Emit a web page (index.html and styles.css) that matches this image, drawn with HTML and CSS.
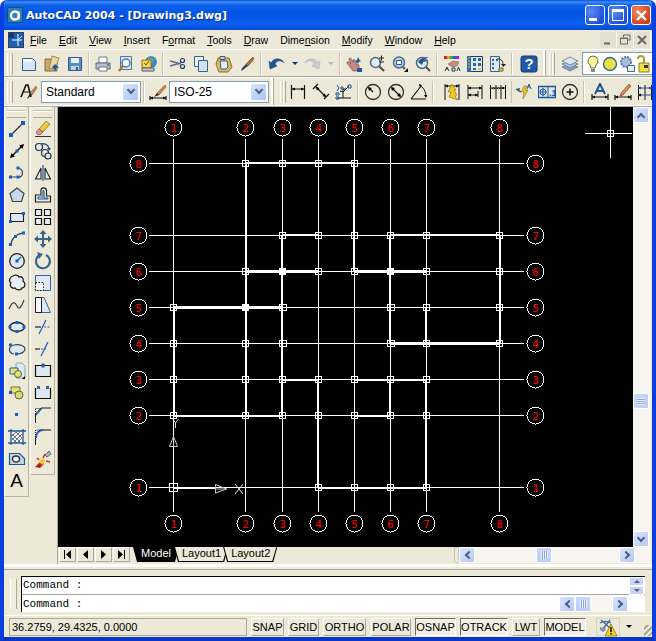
FILE: index.html
```html
<!DOCTYPE html>
<html lang="en">
  <head>
    <meta charset="UTF-8" />
    <title>AutoCAD 2004 - [Drawing3.dwg]</title>
    <link rel="stylesheet" href="styles.css">
  </head>
  <body>
    <div class="window">
      <div class="titlebar">
        <svg class="app-icon" width="16" height="16" viewBox="0 0 16 16"><rect width="16" height="16" fill="#0d4f86"/><rect x="1" y="1" width="14" height="14" fill="#2f7fb0"/><circle cx="8" cy="8.5" r="4" fill="none" stroke="#fff" stroke-width="2.4"/><path d="M11.5 4.5v8" stroke="#fff" stroke-width="2"/></svg>
        <span class="title">AutoCAD 2004 - [Drawing3.dwg]</span>
        <div class="caption-btns">
          <div class="cap-btn"><span class="cap-min"></span></div>
          <div class="cap-btn"><span class="cap-max"></span></div>
          <div class="cap-btn cap-close"><svg width="13" height="13" viewBox="0 0 13 13"><path d="M2 2l9 9M11 2l-9 9" stroke="#fff" stroke-width="2.4"/></svg></div>
        </div>
      </div>

      <div class="menubar">
        <svg class="doc-icon" width="16" height="16" viewBox="0 0 16 16"><rect x=".5" y=".5" width="15" height="15" fill="#1c5fb4" stroke="#33415c"/><path d="M1 1h5v5H1z" fill="#0e3a7a"/><path d="M10 2v12M4 8h10" stroke="#fff"/><path d="M10 8l4-4" stroke="#bfe0ff"/></svg>
        <span class="menu-item"><u>F</u>ile</span>
        <span class="menu-item"><u>E</u>dit</span>
        <span class="menu-item"><u>V</u>iew</span>
        <span class="menu-item"><u>I</u>nsert</span>
        <span class="menu-item">F<u>o</u>rmat</span>
        <span class="menu-item"><u>T</u>ools</span>
        <span class="menu-item"><u>D</u>raw</span>
        <span class="menu-item">Dime<u>n</u>sion</span>
        <span class="menu-item"><u>M</u>odify</span>
        <span class="menu-item"><u>W</u>indow</span>
        <span class="menu-item"><u>H</u>elp</span>
        <div class="mdi-btns">
          <div class="mdi-btn"><svg width="10" height="10" viewBox="0 0 10 10"><path d="M1 8.5h6" stroke="#666" stroke-width="2"/></svg></div>
          <div class="mdi-btn"><svg width="11" height="11" viewBox="0 0 11 11"><path d="M3.500 3V1h6.500v5H8M.5 4h7v6h-7z" fill="none" stroke="#666"/><path d="M1 4.500h6" stroke="#666"/></svg></div>
          <div class="mdi-btn"><svg width="10" height="10" viewBox="0 0 10 10"><path d="M1 1l8 8M9 1l-8 8" stroke="#666" stroke-width="2"/></svg></div>
        </div>
      </div>

      <div class="toolrow toolrow-top">
        <div class="grip"></div>
        <div class="tool"><svg width="18" height="18" viewBox="0 0 18 18"><path d="M2.500 3.500h10l3 3v9h-13z" fill="#d8e6f4" stroke="#35648f"/><path d="M3 4h9v3H3z" fill="#f4f8fc"/></svg></div>
        <div class="tool"><svg width="18" height="18" viewBox="0 0 18 18"><path d="M2 4h5l1 1h6v11H2z" fill="#c9a968" stroke="#7c6a40"/><path d="M9 1l7 2-3 9-7 2z" fill="#e9d9a0" stroke="#9c8a50"/><path d="M12 9l-3 3 4 4v-3h3z" fill="#1f5aa6"/></svg></div>
        <div class="tool"><svg width="18" height="18" viewBox="0 0 18 18"><path d="M2.500 2.500h13v13h-13z" fill="#5a8cc0" stroke="#2f5f92"/><path d="M5 3h8v5H5z" fill="#e8f0f8"/><path d="M5 11h8v4H5z" fill="#c4d2de"/><path d="M10 12h2v3h-2z" fill="#2f5f92"/></svg></div>
        <div class="sep"></div>
        <div class="tool"><svg width="18" height="18" viewBox="0 0 18 18"><path d="M5 2h8v6H5z" fill="#fff" stroke="#6b7b90"/><path d="M2 8h14v6H2z" fill="#b8c0cc" stroke="#5a6878"/><path d="M5 12h8v4H5z" fill="#fff" stroke="#6b7b90"/><path d="M13 10h2" stroke="#334"/></svg></div>
        <div class="tool"><svg width="18" height="18" viewBox="0 0 18 18"><path d="M3.500 1.500h11v13h-11z" fill="#dce8f4" stroke="#4a78a8"/><circle cx="9" cy="8" r="4" fill="#f4f8fc" stroke="#4a78a8" stroke-width="1.500"/><path d="M6 11l-4 5" stroke="#a8762c" stroke-width="2.400"/></svg></div>
        <div class="tool"><svg width="18" height="18" viewBox="0 0 18 18"><circle cx="11" cy="7" r="6" fill="#3f8ac4"/><path d="M8 3l5 1-1 4-4-1z" fill="#6bbf60"/><path d="M2 5h9v8H2z" fill="#f8d84a" stroke="#8c7420"/><path d="M4 8l2 2 3-4" fill="none" stroke="#7a5010"/><path d="M2 13h12v3H2z" fill="#c8ccd4" stroke="#555"/></svg></div>
        <div class="sep sep-6"></div>
        <div class="tool"><svg width="18" height="18" viewBox="0 0 18 18"><path d="M1 6l11 3M1 11l11-3" stroke="#5b6c86" stroke-width="1.300"/><circle cx="13.500" cy="5.500" r="2" fill="none" stroke="#1c3d6a" stroke-width="1.200"/><circle cx="13.500" cy="11.500" r="2" fill="none" stroke="#1c3d6a" stroke-width="1.200"/></svg></div>
        <div class="tool"><svg width="18" height="18" viewBox="0 0 18 18"><path d="M2.500 1.500h9v10h-9z" fill="#e8f0f8" stroke="#35648f"/><path d="M6.500 5.500h9v11h-9z" fill="#d4e2f0" stroke="#35648f"/></svg></div>
        <div class="tool"><svg width="18" height="18" viewBox="0 0 18 18"><path d="M3 3h11l3 9-4 5H4L1 9z" fill="#d8b860" stroke="#8c7430"/><path d="M5 1.500h5v3H5z" fill="#ccd" stroke="#556"/><path d="M5 6h7l1 6-2 2H6z" fill="#e8eef6" stroke="#35648f"/></svg></div>
        <div class="tool"><svg width="18" height="18" viewBox="0 0 18 18"><path d="M15 2L8 9l2 2 6-7z" fill="#b06c30" stroke="#6a3c14" stroke-width=".6"/><path d="M8 9l2 2-5 4-2 1 1-3z" fill="#3a4450"/></svg></div>
        <div class="sep"></div>
        <div class="tool tool-wide"><svg width="19" height="18" viewBox="0 0 19 18"><path d="M4 8c3-6 11-5 13 0-3-3-7-3-9 1l2 2-7 3-1-8z" fill="#1f5596" stroke="#143a6c" stroke-width=".5"/></svg></div>
        <div class="drop"><span class="drop-arrow"></span></div>
        <div class="tool"><svg width="19" height="18" viewBox="0 0 19 18"><path d="M15 8C12 2 4 3 2 8c3-3 7-3 9 1l-2 2 7 3 1-8z" fill="#c8ccd0" stroke="#a8acb0" stroke-width=".5"/></svg></div>
        <div class="drop"><span class="drop-arrow drop-off"></span></div>
        <div class="sep"></div>
        <div class="tool"><svg width="18" height="18" viewBox="0 0 18 18"><path d="M4 4c1-2 2-1 3 1l1 2 1-3 1 3 2-1-1 3 3 1v3l-3 3H8L2 8c0-1 1-2 2-1l2 2z" fill="#c88a80" stroke="#70504c" stroke-width=".7"/><path d="M13 2l1 2h1l-1 1 2 1-2 1-1 2-1-2-2-1 2-1z" fill="#1f5596"/><path d="M12 13h5v4h-5z" fill="#1f5596"/></svg></div>
        <div class="tool"><svg width="18" height="18" viewBox="0 0 18 18"><circle cx="7.500" cy="7.500" r="5" fill="#dcecf8" stroke="#566a80" stroke-width="1.500"/><path d="M11 11l5 5" stroke="#555" stroke-width="2.200"/><path d="M11 3h5M13.500 .5v5M11 7h5" stroke="#222"/></svg></div>
        <div class="tool"><svg width="18" height="18" viewBox="0 0 18 18"><circle cx="8" cy="7.500" r="5.500" fill="#bcd4ea" stroke="#566a80" stroke-width="1.500"/><path d="M5.500 5.500h5v4h-5z" fill="#fff" stroke="#1f5596"/><path d="M12 12l2 2" stroke="#555" stroke-width="2"/><path d="M13 17l4-4v4z" fill="#111"/></svg></div>
        <div class="tool"><svg width="18" height="18" viewBox="0 0 18 18"><circle cx="8" cy="8" r="5.500" fill="#dcecf8" stroke="#566a80" stroke-width="1.500"/><path d="M12 12l4 4" stroke="#555" stroke-width="2.200"/><path d="M4 7c2-4 7-5 11-5l-5 2 3 2-4 1-1 3z" fill="#1f5596"/></svg></div>
        <div class="sep sep-6"></div>
        <div class="tool"><svg width="18" height="18" viewBox="0 0 18 18"><path d="M1 1h3v3H1z" fill="#e02020"/><path d="M4 1h3v3H4z" fill="#e0a020"/><path d="M7 1h3v3H7z" fill="#30b030"/><path d="M10 1h3v3h-3z" fill="#2060e0"/><path d="M13 1h3v3h-3z" fill="#a020c0"/><path d="M5 9l5-3 6 1-2 4-5 1z" fill="#c88a80" stroke="#70504c" stroke-width=".5"/><path d="M2 16l2-4 2 4M5 14h-2M9 13h3v3h-3zM14 16l1.500-4 1.500 4" fill="none" stroke="#2a3a50"/></svg></div>
        <div class="tool"><svg width="18" height="18" viewBox="0 0 18 18"><path d="M1.500 1.500h15v15h-15z" fill="#dce8f4" stroke="#17406e"/><path d="M1 1h4v16H1z" fill="#2f6aa8"/><path d="M2 3h2M2 6h2M2 9h2M2 12h2" stroke="#f0d040"/><path d="M7 3h3v3H7zM12 3h3v3h-3zM7 8h3v3H7zM12 8h3v3h-3zM7 13h3v2H7z" fill="#35648f"/><path d="M12 13h3v2h-3z" fill="#f0c020"/></svg></div>
        <div class="tool"><svg width="18" height="18" viewBox="0 0 18 18"><path d="M1.500 1.500h9v15h-9z" fill="#dce8f4" stroke="#35648f"/><path d="M3 4h2v2H3zM7 4h2v2H7zM3 8h2v2H3zM3 12h2v2H3z" fill="#35648f"/><path d="M8 4c4-1 6 2 6 6" fill="none" stroke="#222"/><path d="M12 9h5l-2.500 3z" fill="#222"/><path d="M10 13h4v3h-4z" fill="#f0c020" stroke="#665"/></svg></div>
        <div class="sep sep-8"></div>
        <div class="tool"><svg width="18" height="18" viewBox="0 0 18 18"><rect x="1" y="1" width="16" height="16" rx="2" fill="#1e5aa8" stroke="#143a6c"/><text x="9" y="14" class="help-glyph">?</text></svg></div>
        <div class="toolbar-end"></div>
        <div class="grip grip-layer"></div>
        <div class="tool"><svg width="18" height="18" viewBox="0 0 18 18"><path d="M9 9l8 3-8 4-8-4z" fill="#8da4c0" stroke="#4d6a8c" stroke-width=".7"/><path d="M9 6l8 3-8 4-8-4z" fill="#b4c6dc" stroke="#4d6a8c" stroke-width=".7"/><path d="M9 2l8 4-8 4-8-4z" fill="#dce6f0" stroke="#4d6a8c" stroke-width=".7"/></svg></div>
        <div class="layer-combo">
          <svg width="16" height="18" viewBox="0 0 16 18"><path d="M8 1a5 5 0 0 1 3 9l-1 3H6l-1-3a5 5 0 0 1 3-9z" fill="#fff7a0" stroke="#6a6a40"/><path d="M6 14h4v3H6z" fill="#889"/></svg>
          <svg width="16" height="18" viewBox="0 0 16 18"><circle cx="8" cy="9" r="6.500" fill="#f0e040" stroke="#2f6aa8" stroke-width="1.400"/></svg>
          <svg width="16" height="18" viewBox="0 0 16 18"><circle cx="7" cy="7" r="5" fill="#a8bcdc" stroke="#5a78a8" stroke-width="2" stroke-dasharray="2 1"/><path d="M8.500 10.500h7v6h-7z" fill="#e8eef6" stroke="#4a6a90"/></svg>
          <svg width="16" height="18" viewBox="0 0 16 18"><path d="M2 4a3 3 0 0 1 6 0v4" fill="none" stroke="#b0a020" stroke-width="2"/><path d="M3 8h10v9H3z" fill="#f0e040" stroke="#8a8020"/><path d="M8 10h4v3H8z" fill="#333"/></svg>
        </div>
      </div>

      <div class="toolrow toolrow-bottom">
        <div class="grip"></div>
        <div class="tool"><svg width="18" height="18" viewBox="0 0 18 18"><path d="M1 14L6 2h2l3 12" fill="none" stroke="#111" stroke-width="1.600"/><path d="M3.500 9h6" stroke="#111"/><path d="M16 3l-6 7 2 2 5-7z" fill="#c8884c" stroke="#6a4a24" stroke-width=".5"/><path d="M10 10l2 2-5 4z" fill="#222"/></svg></div>
        <div class="combo combo-first"><span class="combo-text">Standard</span><span class="combo-btn"><span class="chevron"></span></span></div>
        <div class="sep"></div>
        <div class="tool"><svg width="18" height="18" viewBox="0 0 18 18"><path d="M1 13v4M17 13v4M1 15h16" stroke="#111" stroke-width="1.200"/><path d="M1 15l3-1.500v3zM17 15l-3-1.500v3z"/><path d="M16 2L8 10l2 2 7-8z" fill="#c8884c" stroke="#6a4a24" stroke-width=".5"/><path d="M8 10l2 2-5 2z" fill="#222"/></svg></div>
        <div class="combo"><span class="combo-text">ISO-25</span><span class="combo-btn"><span class="chevron"></span></span></div>
        <div class="toolbar-end toolbar-end-short"></div>
        <div class="grip grip-dim"></div>
        <div class="tool"><svg width="18" height="18" viewBox="0 0 18 18"><path d="M2.500 2v14M15.500 2v14M3 6h12" stroke="#111" stroke-width="1.200"/><path d="M3 6l3-1.500v3zM15 6l-3-1.500v3z"/></svg></div>
        <div class="tool"><svg width="18" height="18" viewBox="0 0 18 18"><path d="M1 6l5-5M12 16l5-5M4 4l10 10" stroke="#111" stroke-width="1.200"/><path d="M4 4l3.500 1-2.500 2.500zM14 14l-3.500-1 2.500-2.500z"/></svg></div>
        <div class="tool"><svg width="18" height="18" viewBox="0 0 18 18"><path d="M8 15V6h3M14 3l-6 6-3-1M2 15h14" fill="none" stroke="#111"/><path d="M2 2l2 3-2 3M1 10h3v2H1zM1 14h3v2H1z" fill="none" stroke="#1f5596"/><path d="M13 2h3v3h-3zM6 4h2v2H6z" fill="none" stroke="#1f5596"/></svg></div>
        <div class="sep sep-6"></div>
        <div class="tool"><svg width="18" height="18" viewBox="0 0 18 18"><circle cx="9" cy="9" r="7.500" fill="none" stroke="#333" stroke-width="1.300"/><path d="M9 9L5 5" stroke="#111" stroke-width="1.300"/><path d="M4 4l4 1-3 3z"/></svg></div>
        <div class="tool"><svg width="18" height="18" viewBox="0 0 18 18"><circle cx="9" cy="9" r="7.500" fill="none" stroke="#333" stroke-width="1.300"/><path d="M5 5l8 8" stroke="#111" stroke-width="1.300"/><path d="M4 4l4 1-3 3zM14 14l-4-1 3-3z"/></svg></div>
        <div class="tool"><svg width="18" height="18" viewBox="0 0 18 18"><path d="M1 16h15M1 16L11 3" stroke="#111" stroke-width="1.200" fill="none"/><path d="M9 2c4 2 7 6 7 12" fill="none" stroke="#111"/><path d="M16 15l-2-3h3z"/><path d="M9 1l3 1-2 2z"/></svg></div>
        <div class="sep sep-10"></div>
        <div class="tool"><svg width="18" height="18" viewBox="0 0 18 18"><path d="M2 1v16M16 1v16M2 3h14" stroke="#111"/><path d="M2 3l3-1.500v3zM16 3l-3-1.500v3z"/><path d="M9 1L5 9h3l-2 5 9 3-3-4 2-1-3-5h2z" fill="#f0c820" stroke="#6a5a10" stroke-width=".5"/></svg></div>
        <div class="tool"><svg width="18" height="18" viewBox="0 0 18 18"><path d="M2 2v14M16 2v14M2 5h14M2 12h10" stroke="#111" fill="none"/><path d="M2 5l3-1.500v3zM16 5l-3-1.500v3zM2 12l3-1.500v3zM12 12l-3-1.500v3z"/><path d="M12 8v6" stroke="#111"/></svg></div>
        <div class="tool"><svg width="18" height="18" viewBox="0 0 18 18"><path d="M1.500 2v14M7 2v14M12 2v14M16.500 2v14M1.500 5h15" stroke="#111" fill="none"/><path d="M2 5l3-1.200v2.400zM7 5l-3-1.200v2.400zM7 5l3-1.200v2.400zM12 5l-3-1.200v2.400zM12 5l3-1.200v2.400z"/></svg></div>
        <div class="sep sep-3"></div>
        <div class="tool"><svg width="18" height="18" viewBox="0 0 18 18"><path d="M1 6l5 3" stroke="#111"/><path d="M1 6l4-1-1 4z" fill="#1f5596"/><path d="M9 3L6 9h3l-1 7 5-9h-3l2-4z" fill="#f0c820" stroke="#6a5a10" stroke-width=".5"/><path d="M12 6l2-5 2 5M13 4h2" fill="none" stroke="#1f5596"/></svg></div>
        <div class="tool"><svg width="18" height="18" viewBox="0 0 18 18"><path d="M.5 3.500h17v11H.5z" fill="#dce8f4" stroke="#1f5596" stroke-width="1.300"/><circle cx="5" cy="9" r="3" fill="none" stroke="#1f5596"/><path d="M5 5v8M1.500 9h7M10 3v12" stroke="#1f5596"/><text x="11" y="13" class="tol-glyph">.1</text></svg></div>
        <div class="tool"><svg width="18" height="18" viewBox="0 0 18 18"><circle cx="9" cy="9" r="7.500" fill="none" stroke="#333" stroke-width="1.300"/><path d="M5.500 9h7M9 5.500v7" stroke="#111" stroke-width="1.500"/></svg></div>
        <div class="sep sep-7"></div>
        <div class="tool"><svg width="18" height="18" viewBox="0 0 18 18"><path d="M1 11v6M17 11v6M1 14h16" stroke="#111" stroke-width="1.200"/><path d="M1 14l3-1.500v3zM17 14l-3-1.500v3z"/><path d="M4 11l5-10 5 10M6 8h6" fill="none" stroke="#1f5596" stroke-width="2"/></svg></div>
        <div class="tool"><svg width="18" height="18" viewBox="0 0 18 18"><path d="M1 12v5M17 12v5M1 14h16" stroke="#111" stroke-width="1.200"/><path d="M1 14l3-1.500v3zM17 14l-3-1.500v3z"/><path d="M15 1l2 2-8 9-3 1 1-3z" fill="#d88a50" stroke="#7a3a20" stroke-width=".6"/></svg></div>
        <div class="tool"><svg width="18" height="18" viewBox="0 0 18 18"><path d="M1.500 2v15M14.500 2v15M8 2v15" stroke="#111"/><path d="M1 5h17M1 12h17" stroke="#1f5596"/><path d="M1 5l3-1.500v3zM15 5l-3-1.500v3z" fill="#1f5596"/><path d="M1 12l3-1.500v3z"/></svg></div>
      </div>

      <div class="workspace">
        <div class="dock">
          <div class="side-bar side-bar-draw">
            <div class="side-grip"></div>
            <div class="side-tool"><svg width="18" height="18" viewBox="0 0 18 18"><path d="M3 15L15 3" stroke="#222" stroke-width="1.100"/><path d="M1 13h4v4H1zM13 1h4v4h-4z" fill="#0f62c6"/></svg></div>
            <div class="side-tool"><svg width="18" height="18" viewBox="0 0 18 18"><path d="M4 14L14 4" stroke="#111" stroke-width="1.500"/><path d="M2 16l1.500-5 3.500 3.500zM16 2l-1.500 5L11 3.500z"/><path d="M7.500 7.500h3v3h-3z" fill="#0f62c6"/></svg></div>
            <div class="side-tool"><svg width="18" height="18" viewBox="0 0 18 18"><path d="M3 13h7c6 0 6-8 0-9" fill="none" stroke="#3c4450" stroke-width="1.200"/><path d="M1 11.500h3v3H1zM8.500 11.500h3v3h-3zM8.500 2.500h3v3h-3z" fill="#0f62c6"/></svg></div>
            <div class="side-tool"><svg width="18" height="18" viewBox="0 0 18 18"><path d="M9 2l7 5.500-2.500 8h-9L2 7.500z" fill="#c9d8e8" stroke="#3c4450" stroke-width="1.200"/></svg></div>
            <div class="side-tool"><svg width="18" height="18" viewBox="0 0 18 18"><path d="M2.500 5.500h13v8h-13z" fill="#dce8f4" stroke="#222" stroke-width="1.100"/><path d="M1 12h3v3H1zM14 4h3v3h-3z" fill="#0f62c6"/></svg></div>
            <div class="side-tool"><svg width="18" height="18" viewBox="0 0 18 18"><path d="M3 15C3 9 8 4 15 3" fill="none" stroke="#3c4450" stroke-width="1.300"/><path d="M1 13h3v3H1zM6 5h3v3H6zM14 1.500h3v3h-3z" fill="#0f62c6"/></svg></div>
            <div class="side-tool"><svg width="18" height="18" viewBox="0 0 18 18"><circle cx="9" cy="9" r="7.300" fill="#dce8f4" stroke="#222" stroke-width="1.300"/><path d="M9 9l4-4" stroke="#0f62c6" stroke-width="1.300"/><path d="M7.500 7.500h3v3h-3z" fill="#0f62c6"/></svg></div>
            <div class="side-tool"><svg width="18" height="18" viewBox="0 0 18 18"><path d="M5 2c3-2 6 0 6 1 3-1 5 2 4 4 3 2 2 7-1 7-1 3-6 2-7 0-3 1-6-2-4-5C0 7 2 3 5 2z" fill="#e8eef6" stroke="#222" stroke-width="1.300"/></svg></div>
            <div class="side-tool"><svg width="18" height="18" viewBox="0 0 18 18"><path d="M1 13c4-9 6-7 8-3s4 2 7-6" fill="none" stroke="#3c4450" stroke-width="1.200"/></svg></div>
            <div class="side-tool"><svg width="18" height="18" viewBox="0 0 18 18"><ellipse cx="9" cy="9" rx="7.500" ry="4.500" fill="#dce8f4" stroke="#222" stroke-width="1.300"/><path d="M7.500 3h3v3h-3zM7.500 12h3v3h-3zM.5 7.500h3v3h-3zM14.500 7.500h3v3h-3z" fill="#0f62c6"/></svg></div>
            <div class="side-tool"><svg width="18" height="18" viewBox="0 0 18 18"><path d="M6 14C0 13 0 6 6 5c6-1 11 1 11 4s-4 5-8 5" fill="#dce8f4" stroke="#3c4450" stroke-width="1.200"/><path d="M1 3.500h3v3H1zM7 12.500h3v3H7z" fill="#0f62c6"/></svg></div>
            <div class="side-tool"><svg width="18" height="18" viewBox="0 0 18 18"><path d="M8 1h6l3 3v12H8z" fill="#dce8f4" stroke="#8aa"/><path d="M2 6h8v6H2z" fill="#f0e070" stroke="#0f62c6"/><circle cx="10" cy="12" r="3.500" fill="#e8e070" stroke="#4a6a30"/><path d="M14 17l3-3v3z"/></svg></div>
            <div class="side-tool"><svg width="18" height="18" viewBox="0 0 18 18"><path d="M3 3h9v6H3z" fill="#f0e070" stroke="#6a7a30"/><circle cx="11" cy="11" r="4" fill="#dcd870" stroke="#5a7040"/><path d="M1 7h3v3H1z" fill="#0f62c6"/></svg></div>
            <div class="side-tool"><svg width="18" height="18" viewBox="0 0 18 18"><path d="M7 7h3v3H7z" fill="#0f62c6"/></svg></div>
            <div class="side-tool"><svg width="18" height="18" viewBox="0 0 18 18"><path d="M3 1v16M15 1v16M0 3h18M0 15h18" stroke="#1f5a90" stroke-width="1.300"/><path d="M4 4h10v10H4z" fill="#fff"/><path d="M4 8l4-4M4 12l8-8M6 14l8-8M10 14l4-4M4 6l8 8M4 10l4 4M8 4l6 6" stroke="#35508a" stroke-width=".8"/></svg></div>
            <div class="side-tool"><svg width="18" height="18" viewBox="0 0 18 18"><path d="M1.500 3.500h10l5 5v6h-15z" fill="#c4d4e4" stroke="#1f5a90" stroke-width="1.200"/><ellipse cx="8" cy="9" rx="3.500" ry="3" fill="#eef3f8" stroke="#333" stroke-width="1.400"/></svg></div>
            <div class="side-tool side-letter">A</div>
          </div>
          <div class="side-bar side-bar-modify">
            <div class="side-grip"></div>
            <div class="side-tool"><svg width="18" height="18" viewBox="0 0 18 18"><path d="M12 1l4 3-7 8-4-3z" fill="#f0c840" stroke="#7a6a20" stroke-width=".7"/><path d="M5 9l4 3-3 3-3-1-1-2z" fill="#e89090" stroke="#8a5050" stroke-width=".7"/><path d="M1 16.500h16" stroke="#333"/></svg></div>
            <div class="side-tool"><svg width="18" height="18" viewBox="0 0 18 18"><circle cx="5" cy="5" r="3.500" fill="#dce8f4" stroke="#333" stroke-width="1.200"/><circle cx="11" cy="11" r="3.500" fill="#dce8f4" stroke="#333" stroke-width="1.200"/><circle cx="14" cy="14" r="3" fill="#dce8f4" stroke="#333" stroke-width="1.200"/><path d="M7 2c4-1 7 1 8 4" fill="none" stroke="#1f5596" stroke-width="1.400"/><path d="M13 6h4l-2 3z" fill="#1f5596"/></svg></div>
            <div class="side-tool"><svg width="18" height="18" viewBox="0 0 18 18"><path d="M9 1v16" stroke="#1f5596" stroke-width="1.200"/><path d="M7 4L1.500 15H7zM11 4l5.500 11H11z" fill="#dce8f4" stroke="#222" stroke-width="1.100"/></svg></div>
            <div class="side-tool"><svg width="18" height="18" viewBox="0 0 18 18"><path d="M1.500 16h15v-6h-4V4.500C12 1 7 1 7 4.500V9H1.500z" fill="none" stroke="#222" stroke-width="1.200"/><path d="M4 13h10v-1h-4V5c0-1-1-1-1 0v6H4z" fill="#dce8f4" stroke="#1f5596"/></svg></div>
            <div class="side-tool"><svg width="18" height="18" viewBox="0 0 18 18"><path d="M1.500 1.500h6v6h-6zM10.500 1.500h6v6h-6zM1.500 10.500h6v6h-6zM10.500 10.500h6v6h-6z" fill="#e8eef6" stroke="#111" stroke-width="1.200"/></svg></div>
            <div class="side-tool"><svg width="18" height="18" viewBox="0 0 18 18"><path d="M2 9h14M9 2v14" stroke="#35648f" stroke-width="2"/><path d="M9 0l3.500 4h-7zM9 18l3.500-4h-7zM0 9l4-3.500v7zM18 9l-4-3.500v7z" fill="#35648f"/></svg></div>
            <div class="side-tool"><svg width="18" height="18" viewBox="0 0 18 18"><path d="M5 3.500A7 7 0 1 0 12 3" fill="none" stroke="#35648f" stroke-width="2.200"/><path d="M3 0l6 2-4 5z" fill="#35648f"/></svg></div>
            <div class="side-tool"><svg width="18" height="18" viewBox="0 0 18 18"><path d="M1.500 1.500h15v15h-15z" fill="#dce8f4" stroke="#35648f"/><path d="M1.500 8.500h8v8h-8z" fill="#f4f6f8" stroke="#222" stroke-dasharray="1.500 1.500"/></svg></div>
            <div class="side-tool"><svg width="18" height="18" viewBox="0 0 18 18"><path d="M1.500 1.500H10M1.500 1.500v15h15L10 1.500z" fill="#dce8f4" stroke="#35648f"/><path d="M1.500 1.500h6v15h-6z" fill="#f4f6f8" stroke="#222"/></svg></div>
            <div class="side-tool"><svg width="18" height="18" viewBox="0 0 18 18"><path d="M12 2L5 16" stroke="#1f5fc0" stroke-width="1.200"/><path d="M1 9h6" stroke="#222" stroke-width="1.200"/><path d="M10 9h7" stroke="#1f5fc0" stroke-dasharray="2 1.500"/></svg></div>
            <div class="side-tool"><svg width="18" height="18" viewBox="0 0 18 18"><path d="M14 2L7 16" stroke="#1f5fc0" stroke-width="1.200"/><path d="M1 9h5" stroke="#222" stroke-width="1.200"/><path d="M7 9h5" stroke="#1f5fc0" stroke-dasharray="2 1.500"/></svg></div>
            <div class="side-tool"><svg width="18" height="18" viewBox="0 0 18 18"><path d="M1.500 3.500h15v11h-15z" fill="#dce8f4" stroke="#111" stroke-width="1.200"/><path d="M7.500 1.500h3v4h-3z" fill="#35648f"/></svg></div>
            <div class="side-tool"><svg width="18" height="18" viewBox="0 0 18 18"><path d="M1.500 3.500h15v11h-15z" fill="#dce8f4" stroke="#111" stroke-width="1.200"/><path d="M1 3h16v1H1z" fill="#ece9d8"/><path d="M3 2h3v3H3zM12 2h3v3h-3z" fill="#35648f"/></svg></div>
            <div class="side-tool"><svg width="18" height="18" viewBox="0 0 18 18"><path d="M1.500 17V8L7 2h10" fill="none" stroke="#222"/><path d="M2 9l6-7" stroke="#1f5fc0" stroke-width="1.200"/><path d="M1.500 2.500h6" stroke="#222" stroke-dasharray="1 1"/><path d="M1.500 8V2" stroke="#222" stroke-dasharray="1 1"/></svg></div>
            <div class="side-tool"><svg width="18" height="18" viewBox="0 0 18 18"><path d="M1.500 17V9M9 2h8" fill="none" stroke="#111"/><path d="M2 10C2 5 5 2 9 2" fill="none" stroke="#1f5fc0" stroke-width="1.800"/><path d="M1.500 9V2h7" fill="none" stroke="#222" stroke-dasharray="1 1"/></svg></div>
            <div class="side-tool"><svg width="18" height="18" viewBox="0 0 18 18"><path d="M1 17l6-6 3 3-4 4z" fill="#b02020"/><path d="M3 8l2 2M9 8l2-4M12 11l4 1" stroke="#e02020" stroke-width="1.500"/><path d="M5 12l4-4 2 3-3 4z" fill="#f0c820"/><path d="M11 5l4-4 2 3-4 3z" fill="#aab6c4" stroke="#667"/></svg></div>
          </div>
        </div>

        <div class="drawing-wrap">
          <div class="drawing-row">
            <svg id="drawing" class="drawing" width="575" height="440" viewBox="58 107 575 440"></svg>
            <div class="vscroll">
              <div class="scroll-btn"><span class="arrow-up"></span></div>
              <div class="vtrack">
                <div class="vthumb"><span class="grips-h"></span></div>
              </div>
              <div class="scroll-btn"><span class="arrow-down"></span></div>
            </div>
          </div>
          <div class="tabrow">
            <div class="tabnav">
              <div class="nav-btn"><svg width="9" height="9" viewBox="0 0 9 9"><path d="M1 0h1v9H1zM8 0v9L3 4.500z"/></svg></div>
              <div class="nav-btn"><svg width="9" height="9" viewBox="0 0 9 9"><path d="M7 0v9L2 4.500z"/></svg></div>
              <div class="nav-btn"><svg width="9" height="9" viewBox="0 0 9 9"><path d="M2 0v9l5-4.500z"/></svg></div>
              <div class="nav-btn"><svg width="9" height="9" viewBox="0 0 9 9"><path d="M1 0v9l5-4.500zM7 0h1v9H7z"/></svg></div>
            </div>
            <div class="tab tab-active"><span>Model</span></div>
            <div class="tab"><span>Layout1</span></div>
            <div class="tab"><span>Layout2</span></div>
            <div class="hscroll">
              <div class="hscroll-notch"></div>
              <div class="scroll-btn"><span class="arrow-left"></span></div>
              <div class="htrack"><div class="hthumb"><span class="grips-v"></span></div></div>
              <div class="scroll-btn"><span class="arrow-right"></span></div>
            </div>
          </div>
        </div>
      </div>

      <div class="command-area">
        <div class="command-grip"></div>
        <div class="command-box">
          <div class="command-line command-line-top">
            <span>Command :</span>
            <div class="spin">
              <div class="spin-btn"><span class="spin-up"></span></div>
              <div class="spin-btn"><span class="spin-down"></span></div>
            </div>
          </div>
          <div class="command-line">
            <span>Command :</span>
            <div class="cmd-scroll">
              <div class="scroll-btn"><span class="arrow-left"></span></div>
              <div class="hthumb cmd-thumb"><span class="grips-v"></span></div>
              <div class="cmd-track"></div>
              <div class="scroll-btn"><span class="arrow-right"></span></div>
            </div>
          </div>
        </div>
      </div>

      <div class="statusbar">
        <div class="coords">36.2759, 29.4325, 0.0000</div>
        <div class="stat stat-snap">SNAP</div>
        <div class="stat stat-grid">GRID</div>
        <div class="stat stat-ortho">ORTHO</div>
        <div class="stat stat-polar">POLAR</div>
        <div class="stat stat-on stat-osnap">OSNAP</div>
        <div class="stat stat-on stat-otrack">OTRACK</div>
        <div class="stat stat-lwt">LWT</div>
        <div class="stat stat-on stat-model">MODEL</div>
        <div class="tray"><svg width="20" height="18" viewBox="0 0 20 18"><path d="M3 1l9 8M12 1L5 10M2 4c3-2 8-2 11 0" fill="none" stroke="#4a6a9c" stroke-width="1.500"/><path d="M2 8c3 1 5 0 6 3l-3 2-3-2z" fill="#7a96c0"/><path d="M13 5l6 12H7z" fill="#f4d020" stroke="#7a6a10" stroke-width=".7"/><path d="M12.300 8h1.400v5h-1.400zM12.300 14h1.400v1.500h-1.400z"/></svg></div>
        <span class="status-drop"></span>
        <div class="resize-grip"></div>
      </div>
    </div>
    <script src="drawing.js"></script>
  </body>
</html>
```

FILE: styles.css
```css
* {
  box-sizing: border-box;
}
html,
body {
  margin: 0;
  padding: 0;
  background-color: #ffffff;
  overflow: hidden;
}
body {
  font-family: "Liberation Sans", Arial, sans-serif;
  font-size: 11px;
  color: #000000;
}
.window {
  width: 656px;
  height: 641px;
  display: flex;
  flex-direction: column;
  background: #ece9d8;
  border-radius: 7px 7px 0 0;
  overflow: hidden;
  border-left: 4px solid #0a3ee0;
  border-right: 4px solid #0a3ee0;
  border-bottom: 4px solid #0a36c8;
}

/* title bar */
.titlebar {
  height: 30px;
  margin: 0 -4px;
  padding: 0 5px 0 7px;
  flex: none;
  display: flex;
  align-items: center;
  background: linear-gradient(#0a50d8 0, #3c8cf6 2px, #0f62ec 5px, #0054e6 14px, #0a60f2 24px, #0048d0 30px);
}
.app-icon {
  flex: none;
  margin-right: 3px;
}
.title {
  color: #ffffff;
  font-family: "DejaVu Sans", sans-serif;
  font-weight: bold;
  font-size: 11px;
  text-shadow: 1px 1px 0 #0a2c90;
  white-space: nowrap;
}
.caption-btns {
  margin-left: auto;
  display: flex;
  gap: 3px;
}
.cap-btn {
  width: 20px;
  height: 20px;
  display: flex;
  align-items: center;
  justify-content: center;
  border: 1px solid #ffffff;
  border-radius: 3px;
  background: radial-gradient(circle at 30% 30%, #5a8cf4, #1c50dc 75%);
}
.cap-close {
  background: radial-gradient(circle at 30% 30%, #ee8a68, #d0401c 75%);
}
.cap-min {
  width: 8px;
  height: 3px;
  margin: 8px 4px 0 0;
  background: #ffffff;
}
.cap-max {
  width: 12px;
  height: 12px;
  border: 1px solid #ffffff;
  border-top-width: 3px;
}

/* menu */
.menubar {
  height: 20px;
  flex: none;
  display: flex;
  align-items: center;
  padding-left: 4px;
  border-bottom: 1px solid #ffffff;
}
.doc-icon {
  flex: none;
}
.menu-item {
  padding: 0 6px 0 6px;
  font-size: 10.500px;
  white-space: nowrap;
}
.mdi-btns {
  margin-left: auto;
  display: flex;
  margin-right: 1px;
}
.mdi-btn {
  width: 17px;
  height: 16px;
  display: flex;
  align-items: center;
  justify-content: center;
  background: #e4e1d0;
  border-right: 1px solid #ffffff;
}

/* toolbars */
.toolrow {
  flex: none;
  display: flex;
  align-items: center;
  overflow: hidden;
  padding-left: 3px;
  padding-top: 1px;
  border-bottom: 1px solid #aca899;
}
.toolrow-top {
  height: 27px;
}
.toolrow-bottom {
  height: 29px;
  padding-top: 0;
  border-top: 1px solid #ffffff;
  border-bottom: 1px solid #ffffff;
}
.grip {
  flex: none;
  width: 6px;
  height: 22px;
  margin-right: 4px;
  border-left: 1px solid #ffffff;
  border-right: 1px solid #aca899;
  background: linear-gradient(90deg, #ece9d8 0 1px, #d8d4c2 1px 2px, #ffffff 2px 3px, #ece9d8 3px);
}
.tool {
  flex: none;
  width: 23px;
  height: 22px;
  display: flex;
  align-items: center;
  justify-content: center;
}
.tool-wide {
  margin-left: 2px;
}
.drop {
  flex: none;
  width: 13px;
  height: 22px;
  display: flex;
  align-items: center;
  justify-content: center;
}
.drop-arrow {
  width: 0;
  height: 0;
  border-left: 3px solid transparent;
  border-right: 3px solid transparent;
  border-top: 3px solid #10337a;
}
.drop-off {
  border-top-color: #b0b8c8;
}
.sep {
  flex: none;
  width: 5px;
  height: 22px;
  background: linear-gradient(90deg, transparent 2px, #c8c4b0 2px 3px, #ffffff 3px 4px, transparent 4px);
}
.sep-3 {
  width: 3px;
}
.sep-6 {
  width: 6px;
}
.sep-7 {
  width: 7px;
}
.sep-8 {
  width: 8px;
}
.sep-10 {
  width: 10px;
}
.toolbar-end {
  flex: none;
  width: 3px;
  height: 27px;
  margin-left: 3px;
  background: #ffffff;
  border-right: 1px solid #aca899;
}
.toolbar-end-short {
  margin-left: 2px;
}
.grip-layer {
  margin: 0 3px 0 3px;
}
.grip-dim {
  margin: 0 0 0 6px;
}
.layer-combo {
  flex: none;
  width: 72px;
  height: 23px;
  margin-left: 1px;
  display: flex;
  align-items: center;
  gap: 1px;
  padding-left: 2px;
  background: #ffffff;
  border: 1px solid #7f9db9;
  border-right: 0;
}
.combo {
  flex: none;
  width: 100px;
  height: 22px;
  display: flex;
  align-items: center;
  justify-content: space-between;
  padding: 0 1px 0 4px;
  background: #ffffff;
  border: 1px solid #7f9db9;
  font-size: 12px;
}
.combo-first {
  margin-left: 1px;
}
.combo-btn {
  width: 17px;
  height: 18px;
  display: flex;
  align-items: center;
  justify-content: center;
  background: linear-gradient(135deg, #d8e4fc, #aec4f4);
  border: 1px solid #ffffff;
  border-radius: 2px;
}
.chevron {
  width: 6px;
  height: 6px;
  margin-top: -3px;
  border-right: 2px solid #4d6185;
  border-bottom: 2px solid #4d6185;
  transform: rotate(45deg);
}
.help-glyph {
  font-family: "Liberation Sans", sans-serif;
  font-weight: bold;
  font-size: 15px;
  fill: #ffffff;
  text-anchor: middle;
}
.tol-glyph {
  font-family: "Liberation Sans", sans-serif;
  font-weight: bold;
  font-size: 9px;
  fill: #1f5596;
}

/* left docks + drawing */
.workspace {
  flex: none;
  height: 458px;
  display: flex;
  border-top: 1px solid #aca899;
}
.dock {
  flex: none;
  width: 54px;
  display: flex;
  align-items: flex-start;
  gap: 1px;
  border-right: 1px solid #aca899;
}
.side-bar {
  width: 25px;
  border: 1px solid #b8b4a0;
  border-top: 0;
  border-left-color: #ffffff;
}
.side-bar-draw {
  height: 390px;
}
.side-bar-modify {
  height: 368px;
}
.side-grip {
  height: 11px;
  margin: 0 2px;
  border-top: 1px solid #ffffff;
  border-bottom: 1px solid #aca899;
  background: linear-gradient(#ece9d8 0 2px, #c8c4b0 2px 3px, #ffffff 3px 4px, #ece9d8 4px);
}
.side-tool {
  height: 22px;
  display: flex;
  align-items: center;
  justify-content: center;
}
.side-letter {
  font-size: 19px;
}
.drawing-wrap {
  flex: none;
  width: 594px;
  display: flex;
  flex-direction: column;
}
.drawing-row {
  display: flex;
  height: 440px;
}
.drawing {
  display: block;
  flex: none;
  background: #000000;
}
.drawing text {
  font-family: "DejaVu Sans Mono", monospace;
  font-size: 11px;
  fill: #ff0000;
  text-anchor: middle;
}

/* scrollbars */
.vscroll {
  flex: none;
  width: 19px;
  display: flex;
  flex-direction: column;
  background: #f6f5ef;
  border-right: 1px solid #ece9d8;
}
.scroll-btn {
  flex: none;
  width: 16px;
  height: 16px;
  display: flex;
  align-items: center;
  justify-content: center;
  background: linear-gradient(135deg, #dbe6fd, #b4c8f6);
  border: 1px solid #ffffff;
  border-radius: 2px;
}
.vtrack {
  flex: 1;
  padding-top: 270px;
}
.vthumb {
  width: 16px;
  height: 16px;
  display: flex;
  align-items: center;
  justify-content: center;
  background: linear-gradient(90deg, #c8d6fa, #bccdf8);
  border: 1px solid #ffffff;
  border-radius: 2px;
}
.arrow-up,
.arrow-down,
.arrow-left,
.arrow-right {
  width: 6px;
  height: 6px;
  border-right: 2px solid #4d6185;
  border-bottom: 2px solid #4d6185;
}
.arrow-up {
  margin-top: 3px;
  transform: rotate(225deg);
}
.arrow-down {
  margin-top: -3px;
  transform: rotate(45deg);
}
.arrow-left {
  margin-left: 3px;
  transform: rotate(135deg);
}
.arrow-right {
  margin-left: -3px;
  transform: rotate(-45deg);
}
.grips-h {
  width: 8px;
  height: 7px;
  background: repeating-linear-gradient(#eef2fe 0 1px, #8ca4dc 1px 2px);
}
.grips-v {
  width: 7px;
  height: 8px;
  background: repeating-linear-gradient(90deg, #eef2fe 0 1px, #8ca4dc 1px 2px);
}
.tabrow {
  height: 16px;
  display: flex;
  align-items: flex-start;
  border-right: 1px solid #ece9d8;
}
.tabnav {
  flex: none;
  display: flex;
  gap: 1px;
  margin-right: 3px;
  padding-left: 1px;
}
.nav-btn {
  width: 17px;
  height: 15px;
  display: flex;
  align-items: center;
  justify-content: center;
  background: #ece9d8;
  border: 1px solid #aca899;
  border-left-color: #ffffff;
  border-top-color: #ffffff;
}
.tab {
  flex: none;
  height: 15px;
  margin-right: -5px;
  padding-bottom: 1px;
  background: #000000;
  clip-path: polygon(0 0, 100% 0, calc(100% - 4px) 100%, 4px 100%);
}
.tab span {
  display: block;
  height: 14px;
  padding: 0 7px 0 8px;
  line-height: 13px;
  font-size: 11px;
  background: #ece9d8;
  clip-path: polygon(1px 0, calc(100% - 1px) 0, calc(100% - 5px) 100%, 5px 100%);
}
.tab-active span {
  background: #000000;
  color: #ffffff;
  padding: 0 8px;
}
.hscroll {
  margin-left: auto;
  width: 197px;
  display: flex;
  background: #f6f5ef;
  padding-right: 16px;
}
.hscroll-notch {
  width: 5px;
  background: #ece9d8;
  border: 1px solid #c8c4b0;
  border-radius: 2px;
}
.htrack {
  flex: 1;
  padding-left: 61px;
}
.hthumb {
  width: 16px;
  height: 16px;
  display: flex;
  align-items: center;
  justify-content: center;
  background: linear-gradient(#c8d6fa, #bccdf8);
  border: 1px solid #ffffff;
  border-radius: 2px;
}

/* command window */
.command-area {
  flex: none;
  height: 51px;
  display: flex;
  align-items: flex-end;
  padding: 0 7px 3px 6px;
  background: linear-gradient(#ffffff 0 3px, #ece9d8 3px 5px, #aca899 5px 6px, #ece9d8 6px);
}
.command-grip {
  width: 7px;
  height: 30px;
  margin: 0 4px 3px 0;
  border-left: 1px solid #ffffff;
  border-right: 1px solid #aca899;
  background: #f0eee0;
}
.command-box {
  flex: 1;
  height: 36px;
  background: #ffffff;
  border-top: 1px solid #000000;
  border-left: 1px solid #000000;
}
.command-line {
  height: 17px;
  display: flex;
  align-items: center;
  justify-content: space-between;
  padding-left: 1px;
  font-family: "Liberation Mono", "Courier New", monospace;
  font-size: 11px;
}
.command-line-top {
  height: 18px;
  border-bottom: 1px solid #aca899;
}
.command-line-top > span {
  margin-bottom: 2px;
}
.spin {
  display: flex;
  flex-direction: column;
  padding-right: 1px;
}
.spin-btn {
  width: 15px;
  height: 9px;
  display: flex;
  align-items: center;
  justify-content: center;
  background: #c4d4fb;
  border: 1px solid #ffffff;
}
.spin-up {
  border-left: 3px solid transparent;
  border-right: 3px solid transparent;
  border-bottom: 3px solid #4d6185;
}
.spin-down {
  border-left: 3px solid transparent;
  border-right: 3px solid transparent;
  border-top: 3px solid #4d6185;
}
.cmd-scroll {
  width: 69px;
  margin-right: 17px;
  display: flex;
  background: #f6f5ef;
}
.cmd-thumb {
  width: 16px;
}
.cmd-track {
  flex: 1;
}

/* status bar */
.statusbar {
  flex: none;
  height: 22px;
  display: flex;
  align-items: center;
  padding-left: 5px;
  border-top: 1px solid #ffffff;
  font-size: 11px;
}
.coords {
  flex: none;
  width: 238px;
  height: 18px;
  line-height: 17px;
  padding-left: 2px;
  border: 1px solid #aca899;
}
.stat {
  flex: none;
  height: 18px;
  margin-left: 4px;
  line-height: 16px;
  text-align: center;
  border: 1px solid;
  border-color: #ffffff #aca899 #aca899 #ffffff;
}
.stat-on {
  border-color: #716f64 #ffffff #ffffff #716f64;
  background: #f2f0e4;
}
.stat-snap { width: 33px; }
.stat-grid { width: 31px; }
.stat-ortho { width: 43px; }
.stat-polar { width: 40px; margin-left: 5px; }
.stat-osnap { width: 41px; }
.stat-otrack { width: 48px; }
.stat-lwt { width: 28px; }
.stat-model { width: 42px; }
.tray {
  flex: none;
  width: 24px;
  height: 18px;
  margin-left: 10px;
  display: flex;
  justify-content: center;
  border: 1px solid #d8d4c2;
}
.status-drop {
  flex: none;
  margin-left: 6px;
  border-left: 3px solid transparent;
  border-right: 3px solid transparent;
  border-top: 3px solid #000000;
}
.resize-grip {
  flex: none;
  width: 11px;
  height: 11px;
  margin: 8px 0 0 12px;
  background: repeating-linear-gradient(135deg, #ece9d8 0 2px, #aca899 2px 4px);
}
```

FILE: drawing.js
```js
// grid positions taken in page pixels, the svg viewBox uses the same numbers
const cols = [173, 245, 282, 318, 354, 390, 426, 499];
const rows = [163, 235, 271, 307, 343, 379, 415, 487]; // row 8 first
const rowLabels = [8, 7, 6, 5, 4, 3, 2, 1];

// wall lines don't sit dead on the grid: [centre offset, width] per col and row
const colWall = [[1, 2], [1, 2], [0, 2], [0, 2], [0, 2], [0, 2], [0, 2], [1, 2]];
const rowWall = [[0, 2], [0, 2], [0.5, 3], [0.5, 3], [0.5, 3], [1, 2], [1, 2], [1, 2]];

// heavy wall segments: [col index, from row index, to row index]
const thickV = [
  [0, 3, 6], [1, 0, 6], [2, 1, 6], [3, 5, 7], [4, 0, 2],
  [5, 1, 4], [5, 5, 6], [6, 3, 4], [6, 5, 7], [7, 1, 4],
];
// [row index, from col index, to col index]
const thickH = [
  [0, 1, 4], [1, 2, 3], [1, 5, 7], [2, 1, 3], [2, 4, 6], [3, 0, 2],
  [4, 5, 7], [5, 2, 3], [5, 4, 6], [6, 0, 2], [6, 4, 5], [7, 3, 6],
];
// column nodes per row
const nodes = [
  [1, 2, 3, 4],
  [2, 3, 4, 5, 6, 7],
  [1, 2, 3, 4, 5, 6, 7],
  [0, 1, 2, 5, 6, 7],
  [0, 1, 2, 5, 6, 7],
  [0, 1, 2, 3, 4, 5, 6],
  [0, 1, 2, 3, 4, 5, 6],
  [3, 4, 5, 6],
];
const filled = ["1,1", "2,2", "2,5", "3,1"];
const doubled = ["3,2", "3,5", "4,2", "4,5"];

const svg = document.getElementById("drawing");

function add(tag, attrs, text) {
  const el = document.createElementNS("http://www.w3.org/2000/svg", tag);
  for (const k in attrs) el.setAttribute(k, attrs[k]);
  if (text !== undefined) el.textContent = text;
  svg.appendChild(el);
  return el;
}

function line(x1, y1, x2, y2, w) {
  add("line", {
    x1, y1, x2, y2,
    stroke: "#fff",
    "stroke-width": w || 1,
    "shape-rendering": "crispEdges",
  });
}

function bubble(x, y, label) {
  add("circle", {
    cx: x, cy: y, r: 8.5,
    fill: "none",
    stroke: "#fff",
    "shape-rendering": "crispEdges",
  });
  add("text", { x, y: y + 4 }, label);
}

cols.forEach((x, i) => {
  line(x + 0.5, 139, x + 0.5, 512);
  bubble(x + 0.5, 127.5, i + 1);
  bubble(x + 0.5, 523.5, i + 1);
});
rows.forEach((y, i) => {
  line(149, y + 0.5, 524, y + 0.5);
  bubble(138.5, y + 0.5, rowLabels[i]);
  bubble(535.5, y + 0.5, rowLabels[i]);
});

thickV.forEach(([c, a, b]) => {
  const [off, w] = colWall[c];
  line(cols[c] + off, rows[a], cols[c] + off, rows[b] + 1, w);
});
thickH.forEach(([r, a, b]) => {
  const [off, w] = rowWall[r];
  line(cols[a], rows[r] + off, cols[b] + 1, rows[r] + off, w);
});
line(173, 488, 216, 488, 2);

nodes.forEach((list, r) => {
  list.forEach((c) => {
    const key = r + "," + c;
    add("rect", {
      x: cols[c] - 2.5,
      y: rows[r] - 2.5,
      width: doubled.includes(key) ? 7 : 6,
      height: 6,
      fill: filled.includes(key) ? "#fff" : "none",
      stroke: "#fff",
      "shape-rendering": "crispEdges",
    });
  });
});

// ucs icon
add("rect", { x: 169.5, y: 483.5, width: 8, height: 8, fill: "none", stroke: "#fff", "shape-rendering": "crispEdges" });
add("path", { d: "M173.500 436.500l4 10h-8zM173.500 436.500v10", fill: "none", stroke: "#ccc" });
add("path", { d: "M215.500 484.500l11 4.500-11 4zM215.500 489h11", fill: "none", stroke: "#ccc" });
add("path", { d: "M235 484l8 10M243 484l-8 10", stroke: "#ddd", fill: "none" });
add("path", { d: "M173 419l2.500 4 3-4M175.500 423v5", stroke: "#ddd", fill: "none" });

// crosshair
line(585, 133.5, 632, 133.5);
line(610.5, 107, 610.5, 158);
add("rect", { x: 607.5, y: 130.5, width: 6, height: 6, fill: "none", stroke: "#fff", "shape-rendering": "crispEdges" });
```
